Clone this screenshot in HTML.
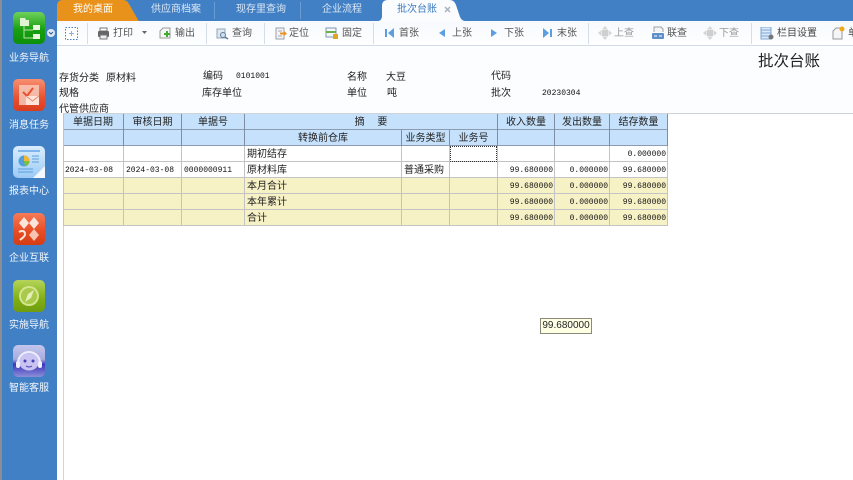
<!DOCTYPE html>
<html lang="zh"><head><meta charset="utf-8"><title>批次台账</title>
<style>
html,body{margin:0;padding:0;width:853px;height:480px;overflow:hidden;background:#fff}
body{position:relative;font-family:"Liberation Sans","Noto Sans CJK SC",sans-serif;font-size:10px;color:#222;filter:blur(.3px)}
div,span,svg{position:absolute}
.t{white-space:nowrap;line-height:12px;height:12px}
.side{left:0;width:58px;text-align:center;color:#f2f6fc;font-size:10px;line-height:12px;padding-left:0}
.tab{top:4px;color:#dbe7f5;font-size:10px;line-height:12px;white-space:nowrap}
.tb{top:28px;color:#555;font-size:10px;line-height:12px;white-space:nowrap}
.dis{color:#9a9a9a}
.sep{top:23px;width:1px;height:21px;background:#d5dde8}
.ic{border-radius:5px;width:32px;height:32px;left:13px}
.h{background:#c5e1fb;height:15px}
.y{background:#f7f1c6;height:15px}
.v{width:1px;top:114px;height:112px;background:#c3c3c3}
.hv{width:1px;top:114px;height:32px;background:#7f8fa3}
.l{height:1px;left:63px;width:605px;background:#c3c3c3}
.c{text-align:center;line-height:15px;height:15px;font-size:10px;white-space:nowrap;color:#222;margin-top:1px}
.n{font-family:"Liberation Mono",monospace;font-size:8px;line-height:15px;height:15px;white-space:nowrap;text-align:right;color:#111;margin-top:1px}
.d{font-family:"Liberation Mono",monospace;font-size:8px;line-height:15px;height:15px;white-space:nowrap;color:#111;margin-top:1px}
.x{line-height:15px;height:15px;font-size:10px;white-space:nowrap;color:#222;margin-top:1px}
</style></head><body>

<!-- content background -->
<div style="left:57px;top:45px;width:796px;height:68px;background:#fcfdff"></div>

<!-- title and info -->
<div class="t" style="left:758px;top:53px;font-size:15.500px;line-height:18px;height:18px;color:#222">批次台账</div>
<div class="t" style="left:59px;top:73px">存货分类</div>
<div class="t" style="left:106px;top:73px">原材料</div>
<div class="t" style="left:203px;top:71px">编码</div>
<div class="t" style="left:236px;top:71px;font-family:'Liberation Mono',monospace;font-size:8px;color:#111">0101001</div>
<div class="t" style="left:347px;top:72px">名称</div>
<div class="t" style="left:386px;top:72px">大豆</div>
<div class="t" style="left:491px;top:71px">代码</div>
<div class="t" style="left:59px;top:88px">规格</div>
<div class="t" style="left:202px;top:88px">库存单位</div>
<div class="t" style="left:347px;top:88px">单位</div>
<div class="t" style="left:387px;top:88px">吨</div>
<div class="t" style="left:491px;top:88px">批次</div>
<div class="t" style="left:542px;top:88px;font-family:'Liberation Mono',monospace;font-size:8px;color:#111">20230304</div>
<div class="t" style="left:59px;top:104px">代管供应商</div>

<div style="left:63px;top:113px;width:790px;height:1px;background:#cfd3d8"></div>
<div style="left:63px;top:114px;width:790px;height:366px;background:#fff"></div>
<div style="left:63px;top:114px;width:1px;height:366px;background:#d4d4d4"></div>

<!-- sidebar -->
<div style="left:0;top:0;width:57px;height:480px;background:#4180c5"></div>
<div style="left:0;top:0;width:2px;height:480px;background:#8b8f94"></div>

<div class="ic" style="top:12px;background:linear-gradient(#6fd15a,#18a011 55%,#0d8f0a)"></div>
<svg style="left:13px;top:12px" width="32" height="32" viewBox="0 0 32 32"><path d="M7 6h5l1 2h3v6H7z" fill="#dff3d2"/><rect x="20" y="13" width="7" height="5" fill="#e8f7dd"/><rect x="20" y="22" width="7" height="5" fill="#e8f7dd"/><path d="M11 14v12h9M11 18h9" stroke="#b6e3a3" fill="none"/></svg>
<div style="left:47px;top:29px;width:8px;height:8px;border-radius:50%;background:#dfe9f5"></div>
<svg style="left:48px;top:30px" width="6" height="6" viewBox="0 0 6 6"><path d="M1 2l2 2 2-2" stroke="#2c5a90" fill="none"/></svg>
<div class="side" style="top:53px">业务导航</div>

<div class="ic" style="top:79px;background:linear-gradient(#f88f72,#e8502f 60%,#d83c1e)"></div>
<svg style="left:13px;top:79px" width="32" height="32" viewBox="0 0 32 32"><rect x="6" y="6" width="20" height="20" fill="#f7c9b8" opacity=".85"/><path d="M10 13l4 4 6-8" stroke="#e8502f" stroke-width="2" fill="none"/><rect x="13" y="17" width="13" height="9" fill="#fde3d8"/><path d="M13 17l6.500 5 6.500-5" stroke="#e58a6e" fill="none"/></svg>
<div class="side" style="top:120px">消息任务</div>

<div class="ic" style="top:146px;background:linear-gradient(#d9edfd,#9ccaf5)"></div>
<svg style="left:13px;top:146px" width="32" height="32" viewBox="0 0 32 32"><rect x="5" y="4" width="22" height="2" fill="#7fb5ea"/><circle cx="11" cy="15" r="5.500" fill="#4fa0dd"/><path d="M11 15V9.500A5.500 5.500 0 0 1 16.500 15z" fill="#f2b632"/><path d="M11 15h5.500A5.500 5.500 0 0 1 12 20.400z" fill="#7fbe3c"/><path d="M19 10h7M19 13h7M19 16h7M5 23h15M5 26h15" stroke="#5b9fe0"/><path d="M32 20v12H20z" fill="#f4f8fd"/></svg>
<div class="side" style="top:186px">报表中心</div>

<div class="ic" style="top:213px;background:linear-gradient(#f67b57,#e84e26 55%,#d63c14)"></div>
<svg style="left:13px;top:213px" width="32" height="32" viewBox="0 0 32 32"><path d="M11 4l5 6-5 6-5-6zM21 4l5 6-5 6-5-6z" fill="#fbe4da"/><path d="M21 16l5 6-5 6-5-6z" fill="#f6c4b0"/><path d="M6 19c3-2 6-1 6 2s-3 4-5 6" stroke="#fbe4da" stroke-width="2" fill="none"/></svg>
<div class="side" style="top:253px">企业互联</div>

<div class="ic" style="top:280px;background:linear-gradient(#b5d45a,#80ae14 60%,#6f9c0d)"></div>
<svg style="left:13px;top:280px" width="32" height="32" viewBox="0 0 32 32"><circle cx="16" cy="16" r="10" fill="#d3e58e"/><circle cx="16" cy="16" r="8" fill="#a9c94a"/><path d="M21 10l-3 8-6 4 3-8z" fill="#e4f0ba"/></svg>
<div class="side" style="top:320px">实施导航</div>

<div class="ic" style="top:345px;background:linear-gradient(#c3c6ec 0,#a8abdf 45%,#3a36bb 60%,#8d8ed8)"></div>
<svg style="left:13px;top:345px" width="32" height="32" viewBox="0 0 32 32"><ellipse cx="16" cy="17" rx="10" ry="8.500" fill="#c9c3f2"/><path d="M5 18a11 11 0 0 1 22 0" stroke="#eef" stroke-width="2" fill="none"/><rect x="3" y="16" width="4" height="7" rx="2" fill="#eef"/><rect x="25" y="16" width="4" height="7" rx="2" fill="#eef"/><circle cx="12" cy="16" r="1.500" fill="#4644b0"/><circle cx="20" cy="16" r="1.500" fill="#4644b0"/><path d="M13 21q3 2 6 0" stroke="#4644b0" fill="none"/></svg>
<div class="side" style="top:383px">智能客服</div>

<!-- tab bar -->
<div style="left:57px;top:0;width:796px;height:21px;background:#4180c5"></div>
<svg style="left:57px;top:0" width="83" height="22" viewBox="0 0 83 22"><path d="M0 21V6Q0 0 6 0H66Q70 0 72 4L80 18Q81 21 83 21z" fill="#e8921c"/></svg>
<svg style="left:378px;top:0" width="87" height="22" viewBox="0 0 87 22"><path d="M0 21Q3 21 4 17V6Q4 0 10 0H72Q76 0 78 5L82 17Q84 21 87 21z" fill="#fbfcfe"/></svg>
<div style="left:214px;top:2px;width:1px;height:17px;background:#6a9bd2"></div>
<div style="left:300px;top:2px;width:1px;height:17px;background:#6a9bd2"></div>
<div class="tab" style="left:73px;color:#fff">我的桌面</div>
<div class="tab" style="left:151px">供应商档案</div>
<div class="tab" style="left:236px">现存里查询</div>
<div class="tab" style="left:322px">企业流程</div>
<div class="tab" style="left:397px;color:#3f7cc0">批次台账</div>
<svg style="left:444px;top:6px" width="7" height="7" viewBox="0 0 7 7"><path d="M1 1l5 5M6 1l-5 5" stroke="#a9b2bd" stroke-width="1.500"/></svg>

<!-- toolbar -->
<div style="left:57px;top:21px;width:796px;height:24px;background:linear-gradient(#f7fafe,#fdfeff)"></div>
<div style="left:57px;top:45px;width:796px;height:1px;background:#d2dbe6"></div>

<svg style="left:65px;top:27px" width="13" height="13" viewBox="0 0 13 13"><rect x=".5" y=".5" width="12" height="12" fill="#fff" stroke="#4a7fc0" stroke-dasharray="1.500 1.500"/><path d="M6.500 4v5M4 6.500h5" stroke="#8fb0da"/></svg>
<div class="sep" style="left:87px"></div>
<svg style="left:97px;top:27px" width="13" height="13" viewBox="0 0 13 13"><rect x="3" y="1" width="7" height="3" fill="#fff" stroke="#777"/><rect x="1" y="4" width="11" height="6" rx="1" fill="#666"/><rect x="3" y="8" width="7" height="4" fill="#eee" stroke="#777"/></svg>
<div class="tb" style="left:113px">打印</div>
<svg style="left:142px;top:31px" width="5" height="4" viewBox="0 0 5 4"><path d="M0 0h5L2.500 3z" fill="#666"/></svg>
<svg style="left:159px;top:27px" width="13" height="13" viewBox="0 0 13 13"><path d="M1 4l3-3h7v10H1z" fill="#f5f6f7" stroke="#999"/><path d="M7 4h2v2h2v2H9v2H7V8H5V6h2z" fill="#42ad2c"/></svg>
<div class="tb" style="left:175px">输出</div>
<div class="sep" style="left:206px"></div>
<svg style="left:216px;top:27px" width="13" height="13" viewBox="0 0 13 13"><rect x="1" y="2" width="8" height="9" fill="#dfe7ef" stroke="#91a5ba"/><circle cx="7" cy="8" r="2.500" fill="#cfe0f1" stroke="#627d9a"/><path d="M9 10l3 2" stroke="#627d9a" stroke-width="1.500"/></svg>
<div class="tb" style="left:232px">查询</div>
<div class="sep" style="left:264px"></div>
<svg style="left:274px;top:27px" width="13" height="13" viewBox="0 0 13 13"><rect x="2" y="1" width="8" height="11" fill="#f4f4f4" stroke="#98a0aa"/><path d="M4 4h4M4 9h4" stroke="#a5adb7"/><path d="M6 5.500h4V4l3 2.500-3 2.500V7.500H6z" fill="#e8922a"/></svg>
<div class="tb" style="left:289px">定位</div>
<svg style="left:325px;top:27px" width="14" height="13" viewBox="0 0 14 13"><rect x="1" y="1" width="10" height="9" fill="#f5f8fb" stroke="#7c96b5"/><path d="M1 5h10" stroke="#6eae4a" stroke-width="2"/><rect x="8" y="7" width="5" height="5" fill="#e0a51f"/></svg>
<div class="tb" style="left:342px">固定</div>
<div class="sep" style="left:373px"></div>
<svg style="left:385px;top:28px" width="9" height="10" viewBox="0 0 9 10"><rect x="0" y="1" width="2" height="8" fill="#5d9ee0"/><path d="M9 0v10L3 5z" fill="#5d9ee0"/></svg>
<div class="tb" style="left:399px">首张</div>
<svg style="left:439px;top:28px" width="6" height="10" viewBox="0 0 6 10"><path d="M6 1v8L0 5z" fill="#5d9ee0"/></svg>
<div class="tb" style="left:452px">上张</div>
<svg style="left:491px;top:28px" width="6" height="10" viewBox="0 0 6 10"><path d="M0 1v8l6-4z" fill="#5d9ee0"/></svg>
<div class="tb" style="left:504px">下张</div>
<svg style="left:543px;top:28px" width="9" height="10" viewBox="0 0 9 10"><rect x="7" y="1" width="2" height="8" fill="#5d9ee0"/><path d="M0 0v10l6-5z" fill="#5d9ee0"/></svg>
<div class="tb" style="left:557px">末张</div>
<div class="sep" style="left:588px"></div>
<svg style="left:598px;top:26px" width="14" height="14" viewBox="0 0 14 14"><path d="M7 0l3 3.500h-6zM7 14l3-3.500h-6zM0 7l3.500-3v6zM14 7l-3.500-3v6z" fill="#d5d5d5"/><rect x="4" y="4" width="6" height="6" fill="#cfcfcf"/></svg>
<div class="tb dis" style="left:614px">上查</div>
<svg style="left:651px;top:26px" width="14" height="14" viewBox="0 0 14 14"><path d="M3 6V1h7l2 2v3" fill="#f4f4f4" stroke="#9aa0a8"/><rect x="1" y="7" width="12" height="6" rx="1" fill="#5f8fcb"/><path d="M3 10h3M8 10h3" stroke="#fff"/></svg>
<div class="tb" style="left:667px">联查</div>
<svg style="left:703px;top:26px" width="14" height="14" viewBox="0 0 14 14"><path d="M7 0l3 3.500h-6zM7 14l3-3.500h-6zM0 7l3.500-3v6zM14 7l-3.500-3v6z" fill="#d5d5d5"/><rect x="4" y="4" width="6" height="6" fill="#cfcfcf"/></svg>
<div class="tb dis" style="left:719px">下查</div>
<div class="sep" style="left:751px"></div>
<svg style="left:760px;top:27px" width="14" height="13" viewBox="0 0 14 13"><rect x="1" y="0" width="10" height="12" fill="#dbeafa" stroke="#7ea5d2"/><path d="M1 3h10M1 6h10M1 9h10" stroke="#7ea5d2"/><circle cx="11" cy="10" r="2.500" fill="#777"/></svg>
<div class="tb" style="left:777px;color:#444">栏目设置</div>
<svg style="left:832px;top:26px" width="14" height="14" viewBox="0 0 14 14"><path d="M1 5l3-3h6v11H1z" fill="#f5f5f5" stroke="#999"/><circle cx="10" cy="3" r="2.500" fill="#f0a81c"/></svg>
<div class="tb" style="left:848px;color:#444">单</div>

<!-- grid backgrounds -->
<div class="h" style="left:63px;top:114px;width:605px"></div>
<div class="h" style="left:63px;top:130px;width:605px"></div>
<div class="y" style="left:63px;top:178px;width:605px"></div>
<div class="y" style="left:63px;top:194px;width:605px"></div>
<div class="y" style="left:63px;top:210px;width:605px"></div>

<!-- grid lines -->
<div class="l" style="top:129px;background:#8d9cb0"></div>
<div class="l" style="top:145px;background:#8d9cb0"></div>
<div class="l" style="top:161px"></div>
<div class="l" style="top:177px"></div>
<div class="l" style="top:193px"></div>
<div class="l" style="top:209px"></div>
<div class="l" style="top:225px"></div>
<div class="v" style="left:63px"></div>
<div class="v" style="left:123px"></div>
<div class="v" style="left:181px"></div>
<div class="v" style="left:244px"></div>
<div class="v" style="left:401px;top:130px;height:96px"></div>
<div class="v" style="left:449px;top:130px;height:96px"></div>
<div class="v" style="left:497px"></div>
<div class="v" style="left:554px"></div>
<div class="v" style="left:609px"></div>
<div class="v" style="left:667px"></div>
<div class="hv" style="left:123px"></div>
<div class="hv" style="left:181px"></div>
<div class="hv" style="left:244px"></div>
<div class="hv" style="left:401px;top:130px;height:16px"></div>
<div class="hv" style="left:449px;top:130px;height:16px"></div>
<div class="hv" style="left:497px"></div>
<div class="hv" style="left:554px"></div>
<div class="hv" style="left:609px"></div>
<div class="hv" style="left:667px"></div>

<!-- headers -->
<div class="c" style="left:63px;top:114px;width:60px">单据日期</div>
<div class="c" style="left:124px;top:114px;width:57px">审核日期</div>
<div class="c" style="left:182px;top:114px;width:62px">单据号</div>
<div class="c" style="left:245px;top:114px;width:252px;word-spacing:0">摘　&nbsp;要</div>
<div class="c" style="left:498px;top:114px;width:56px">收入数量</div>
<div class="c" style="left:555px;top:114px;width:54px">发出数量</div>
<div class="c" style="left:610px;top:114px;width:57px">结存数量</div>
<div class="c" style="left:245px;top:130px;width:156px">转换前仓库</div>
<div class="c" style="left:402px;top:130px;width:47px">业务类型</div>
<div class="c" style="left:450px;top:130px;width:47px">业务号</div>

<!-- row 1 -->
<div class="x" style="left:247px;top:146px">期初结存</div>
<div style="left:450px;top:146px;width:45px;height:14px;border:1px dotted #333"></div>
<div class="n" style="left:610px;top:146px;width:56px">0.000000</div>
<!-- row 2 -->
<div class="d" style="left:65px;top:162px">2024-03-08</div>
<div class="d" style="left:126px;top:162px">2024-03-08</div>
<div class="d" style="left:184px;top:162px">0000000911</div>
<div class="x" style="left:247px;top:162px">原材料库</div>
<div class="x" style="left:404px;top:162px">普通采购</div>
<div class="n" style="left:498px;top:162px;width:55px">99.680000</div>
<div class="n" style="left:555px;top:162px;width:53px">0.000000</div>
<div class="n" style="left:610px;top:162px;width:56px">99.680000</div>
<!-- row 3 -->
<div class="x" style="left:247px;top:178px">本月合计</div>
<div class="n" style="left:498px;top:178px;width:55px">99.680000</div>
<div class="n" style="left:555px;top:178px;width:53px">0.000000</div>
<div class="n" style="left:610px;top:178px;width:56px">99.680000</div>
<!-- row 4 -->
<div class="x" style="left:247px;top:194px">本年累计</div>
<div class="n" style="left:498px;top:194px;width:55px">99.680000</div>
<div class="n" style="left:555px;top:194px;width:53px">0.000000</div>
<div class="n" style="left:610px;top:194px;width:56px">99.680000</div>
<!-- row 5 -->
<div class="x" style="left:247px;top:210px">合计</div>
<div class="n" style="left:498px;top:210px;width:55px">99.680000</div>
<div class="n" style="left:555px;top:210px;width:53px">0.000000</div>
<div class="n" style="left:610px;top:210px;width:56px">99.680000</div>

<!-- tooltip -->
<div style="left:540px;top:318px;width:50px;height:14px;background:#ffffe6;border:1px solid #8a8a7a;font-size:10px;line-height:14px;text-align:center;color:#222;white-space:nowrap">99.680000</div>
</body></html>
